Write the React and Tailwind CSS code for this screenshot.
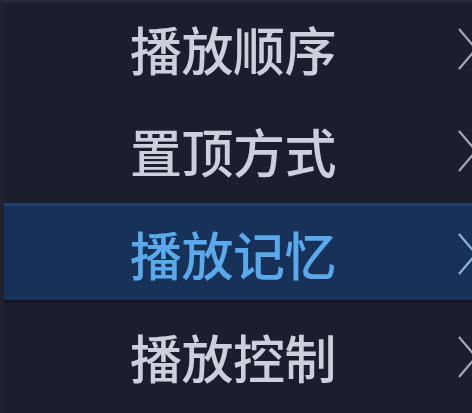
const items = [
  { label: "播放顺序", pad: "pb-[9px]" },
  { label: "置顶方式", pad: "pb-[4px]" },
  { label: "播放记忆", pad: "pt-[2px]", active: true },
  { label: "播放控制", pad: "pt-[8px]" },
];

const Chevron = ({ color }) => (
  <svg width="20" height="44" viewBox="0 0 20 44" className="ml-auto mr-[-5px] shrink-0">
    <polyline points="2,2 19,22 2,42" fill="none" stroke={color} strokeWidth="2.2" strokeLinejoin="miter" />
  </svg>
);

export default function App() {
  return (
    <div
      className="w-[472px] h-[413px] overflow-hidden bg-[#1b1e2d] border-t-[3px] border-t-[#262a3a] border-l-[4px] border-l-[#20232f]"
      style={{ fontFamily: '"Noto Sans CJK SC", "Noto Sans", sans-serif' }}
    >
      {items.map((item) => (
        <div
          key={item.label}
          className={
            (item.active
              ? "h-[100px] flex items-center pl-[126px] bg-[#173159] border-t-[3px] border-t-[#224068] border-b-[3px] border-b-[#121624] "
              : "h-[100px] flex items-center pl-[126px] ") + item.pad
          }
        >
          <span
            className={
              item.active
                ? "text-[52px] font-medium leading-none tracking-[-0.5px] text-[#5aa9ea]"
                : "text-[52px] font-medium leading-none tracking-[-0.5px] text-[#cdd0dc]"
            }
          >
            {item.label}
          </span>
          <Chevron color={item.active ? "#8fb2d8" : "#a2a7b6"} />
        </div>
      ))}
    </div>
  );
}
